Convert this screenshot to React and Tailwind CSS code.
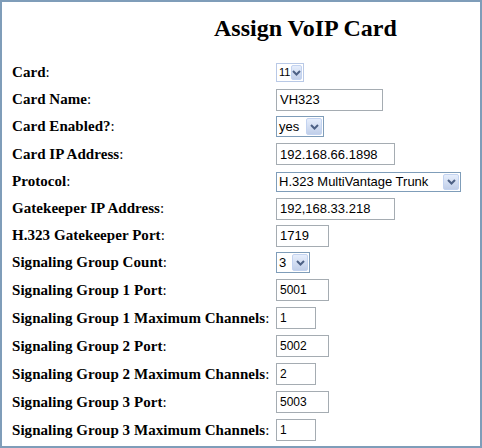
import React from 'react';

const serif = { fontFamily: '"Liberation Serif", "Times New Roman", serif' };

function Chevron() {
  return (
    <svg width="9" height="6" viewBox="0 0 9 6">
      <path d="M1 1 L4.5 4.5 L8 1" fill="none" stroke="#4d6185" strokeWidth="2" />
    </svg>
  );
}

function Select({ value, width, height = 21, light = false, textSize = 'text-[13px]', btn = 'w-[16px]' }) {
  return (
    <div
      className={`flex items-stretch bg-white border ${light ? 'border-[#b9c9e6]' : 'border-[#7f9db9]'}`}
      style={{ width, height }}
    >
      <div className={`flex-1 flex items-center pl-[2px] ${textSize} text-black leading-none`}>{value}</div>
      <div className={`${btn} m-[1px] flex items-center justify-center rounded-[2px] border border-[#c3d3f0] bg-gradient-to-b from-[#e6eefc] to-[#c1cfe9]`}>
        <Chevron />
      </div>
    </div>
  );
}

function TextBox({ value, width, small = false }) {
  return (
    <div
      className={`h-[22px] flex items-center bg-white border border-[#a5acb2] pl-[3px] text-black leading-none ${small ? 'text-[12px]' : 'text-[13px]'}`}
      style={{ width }}
    >
      {value}
    </div>
  );
}

const rows = [
  { label: 'Card', h: 'h-[27px]', ctrl: <Select value="11" width={28} height={19} light textSize="text-[11px]" btn="w-[11px]" /> },
  { label: 'Card Name', h: 'h-[27px]', ctrl: <TextBox value="VH323" width={107} /> },
  { label: 'Card Enabled?', h: 'h-[27px]', ctrl: <Select value="yes" width={48} /> },
  { label: 'Card IP Address', h: 'h-[28px]', ctrl: <TextBox value="192.168.66.1898" width={119} /> },
  { label: 'Protocol', h: 'h-[27px]', ctrl: <Select value="H.323 MultiVantage Trunk" width={185} height={20} /> },
  { label: 'Gatekeeper IP Address', h: 'h-[27px]', ctrl: <TextBox value="192,168.33.218" width={119} /> },
  { label: 'H.323 Gatekeeper Port', h: 'h-[27px]', ctrl: <TextBox value="1719" width={53} /> },
  { label: 'Signaling Group Count', h: 'h-[27px]', ctrl: <Select value="3" width={34} /> },
  { label: 'Signaling Group 1 Port', h: 'h-[28px]', ctrl: <TextBox value="5001" width={53} small /> },
  { label: 'Signaling Group 1 Maximum Channels', h: 'h-[28px]', ctrl: <TextBox value="1" width={40} small /> },
  { label: 'Signaling Group 2 Port', h: 'h-[28px]', ctrl: <TextBox value="5002" width={53} small /> },
  { label: 'Signaling Group 2 Maximum Channels', h: 'h-[28px]', ctrl: <TextBox value="2" width={40} small /> },
  { label: 'Signaling Group 3 Port', h: 'h-[28px]', ctrl: <TextBox value="5003" width={53} small /> },
  { label: 'Signaling Group 3 Maximum Channels', h: 'h-[28px]', ctrl: <TextBox value="1" width={40} small /> },
];

export default function App() {
  return (
    <div
      className="w-[482px] h-[448px] bg-white border-2 border-[#7f9db9] overflow-hidden"
      style={{ fontFamily: '"Liberation Sans", Arial, sans-serif' }}
    >
      <h2 className="pl-[212px] pt-[12px] h-[57px] text-[24px] font-bold text-black leading-[28px]" style={serif}>
        Assign VoIP Card
      </h2>
      <div className="pl-[10px]">
        {rows.map((row) => (
          <div key={row.label} className={`flex items-center ${row.h}`}>
            <div className="w-[264px] text-[15px] tracking-[0.05px] text-black" style={serif}>
              <span className="font-bold">{row.label}</span>:
            </div>
            {row.ctrl}
          </div>
        ))}
      </div>
    </div>
  );
}
